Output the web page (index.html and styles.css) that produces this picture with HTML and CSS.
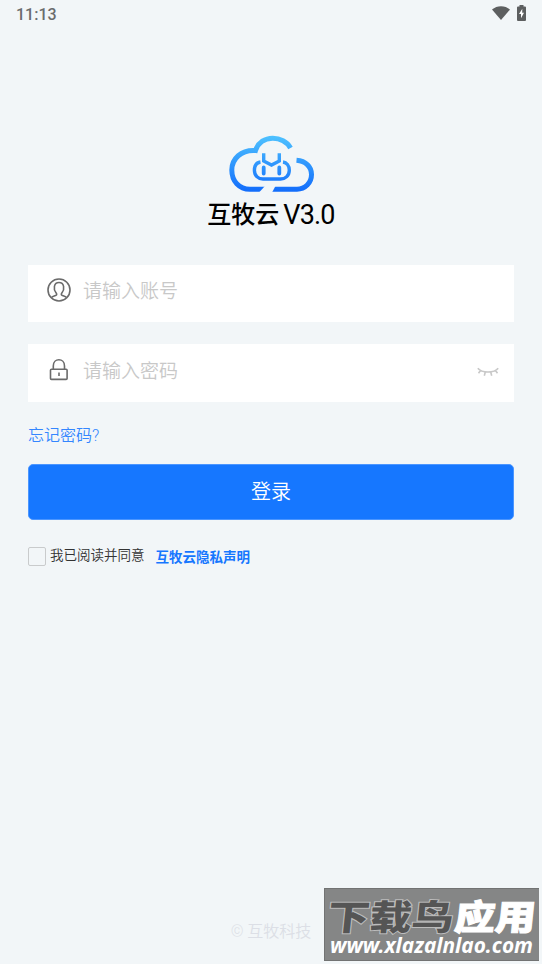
FILE: index.html
```
<!DOCTYPE html>
<html lang="zh-CN">

<head>
    <meta charset="UTF-8">
    <meta name="viewport" content="width=device-width, initial-scale=1.0">
    <title>互牧云</title>
    <link rel="stylesheet" href="styles.css">
</head>

<body>

    <!-- Status bar -->
    <div class="status-bar">
        <span class="time">11:13</span>
        <div class="status-icons">
            <svg width="18" height="14" viewBox="0 0 18 14">
                <path d="M0 3.6C5 -.9 13 -.9 18 3.6L9 14z" fill="#5d5f60" />
            </svg>
            <svg width="9" height="16" viewBox="0 0 9 16">
                <path d="M2.5 0h4v1.5H8q1 0 1 1V15q0 1-1 1H1q-1 0-1-1V2.5q0-1 1-1h1.5z" fill="#5d5f60" />
                <path d="M5.3 3.7L2 9h2v4.3L7 7.7H5.2z" fill="#fff" />
            </svg>
        </div>
    </div>

    <!-- Logo -->
    <header class="logo">
        <svg class="logo-cloud" width="90" height="62" viewBox="0 0 90 62" fill="none" stroke="url(#cloudBlue)" stroke-width="5">
            <defs>
                <linearGradient id="cloudBlue" gradientUnits="userSpaceOnUse" x1="0" y1="2" x2="0" y2="59">
                    <stop offset="0" stop-color="#4fc3ff" />
                    <stop offset="1" stop-color="#126cfb" />
                </linearGradient>
            </defs>
            <path d="M63.5 15C57 2.500 34 .5 28.500 17.500C14 16.500 4.800 26 4.800 37C4.800 48 12 56.200 23 56.200H70C78 56.200 84.500 50 84.500 41.500C84.500 34 79 28 69.500 27.300" />
            <path class="cloud-gap" d="M38 53h10.500L45 59.500H32z" />
            <path d="M33.500 29C30 29.500 27.400 32.500 27.400 37.300C27.400 42.500 31 46 36 46H53.500C58.500 46 62.300 42.500 62.300 37.300C62.300 32.500 59.500 29.500 56 29" stroke-width="3.400" />
            <path d="M36.700 20.300V28L44.500 32L52.300 28V20.300" stroke-width="3.400" />
            <path d="M36.700 34.500v6M52.300 34.500v6" stroke-width="3.800" stroke-linecap="round" />
        </svg>
        <h1 class="logo-name"><span>互牧云</span><span class="version">V3.0</span></h1>
    </header>

    <!-- Login form -->
    <form class="login">
        <label class="field">
            <svg class="field-icon" width="24" height="24" viewBox="0 0 24 24" fill="none" stroke="#6b6b6b" stroke-width="1.6">
                <circle cx="12" cy="12" r="11" />
                <path d="M4.500 19.500C5.500 18.200 8 17.800 9 17.300C10 16.700 9.800 15.800 9 14.800C6.200 11.200 6.600 4.500 12 4.500C17.400 4.500 17.800 11.200 15 14.800C14.200 15.800 14 16.700 15 17.300C16 17.800 18.500 18.200 19.500 19.500" />
            </svg>
            <input type="text" placeholder="请输入账号">
        </label>
        <label class="field field-password">
            <svg class="field-icon" width="24" height="24" viewBox="0 0 24 24" fill="none" stroke="#6b6b6b" stroke-width="1.6">
                <rect x="3.500" y="11.200" width="16.600" height="10.200" rx="1" />
                <path d="M6.300 11.200V8C6.300 -.3 17.500 -.3 17.500 8v3.200M12 14.500v3.500" />
            </svg>
            <input type="password" placeholder="请输入密码">
            <svg class="eye" width="22" height="10" viewBox="0 0 22 10" fill="none" stroke="#c8c8c8" stroke-width="1.6">
                <path d="M.8 1.200C5 6.300 17 6.300 21.200 1.200M3.500 3.500L1.500 6.200M8.300 5L7.300 8.800M13.700 5l1 3.800M18.500 3.500l2 2.700" />
            </svg>
        </label>
        <a class="forgot" href="#">忘记密码?</a>
        <button class="submit" type="button">登录</button>
        <div class="agreement">
            <span class="checkbox"></span>
            <span class="agree-text">我已阅读并同意</span>
            <a class="privacy" href="#">互牧云隐私声明</a>
        </div>
    </form>

    <footer class="copyright">© 互牧科技</footer>

    <!-- Download site badge -->
    <div class="site-badge">
        <svg width="215" height="73" viewBox="0 0 215 73">
            <g class="badge-title" transform="skewX(-6)">
                <text class="badge-dark" x="7" y="42" textLength="126" lengthAdjust="spacingAndGlyphs">下载鸟</text>
                <text class="badge-light" x="134" y="42" textLength="81" lengthAdjust="spacingAndGlyphs">应用</text>
            </g>
            <text class="badge-url" x="6" y="65" textLength="203" lengthAdjust="spacingAndGlyphs">www.xlazalnlao.com</text>
        </svg>
    </div>

</body>

</html>
```
FILE: styles.css
```
* {
    margin: 0;
    padding: 0;
    box-sizing: border-box;
    font-family: Roboto, "Noto Sans CJK SC", sans-serif;
}

body {
    display: flex;
    flex-direction: column;
    height: 964px;
    overflow: hidden;
    background-color: #f2f6f8;
}

a {
    text-decoration: none;
}

svg {
    display: block;
}

/* Status bar */
.status-bar {
    display: flex;
    justify-content: space-between;
    height: 28px;
    padding: 5px 16px 0;
}

.time {
    font-size: 16px;
    font-weight: 500;
    line-height: 19px;
    color: #6a6c6d;
}

.status-icons {
    display: flex;
    gap: 7px;
}

.status-icons svg:first-child {
    margin-top: 1px;
}

/* Logo */
.logo {
    display: flex;
    flex-direction: column;
    align-items: center;
    height: 237px;
    padding-top: 105px;
}

.logo-cloud {
    margin-left: 2px;
}

.cloud-gap {
    fill: #f2f6f8;
    stroke: none;
}

.logo-name {
    display: flex;
    gap: 4px;
    margin-top: 5px;
    font-size: 24px;
    font-weight: 500;
    line-height: 30px;
    color: #000;
}

.version {
    font-size: 27px;
    font-weight: 400;
    letter-spacing: -0.8px;
}

/* Form */
.login {
    display: flex;
    flex-direction: column;
    padding: 0 28px;
}

.field {
    display: flex;
    height: 57px;
    padding: 13px 15px 0 19px;
    background: white;
}

.field-password {
    margin-top: 22px;
    height: 58px;
    padding-top: 14px;
}

.field input {
    flex: 1;
    min-width: 0;
    height: 26px;
    margin-left: 12px;
    border: none;
    outline: none;
    background: none;
    font-size: 19px;
    font-weight: 350;
}

.field input::placeholder {
    color: #c8c8c8;
}

.eye {
    margin-top: 9px;
}

.forgot {
    margin-top: 22px;
    font-size: 16px;
    line-height: 24px;
    font-weight: 350;
    color: #3486ff;
}

.submit {
    height: 56px;
    margin-top: 16px;
    padding-bottom: 3px;
    border: 1px solid #4c96ff;
    border-radius: 5px;
    background: #1677ff;
    color: white;
    font-size: 20px;
    font-weight: 350;
}

.agreement {
    display: flex;
    margin-top: 25px;
    font-size: 13.5px;
    line-height: 20px;
}

.checkbox {
    width: 18px;
    height: 19px;
    margin: 2px 4px 0 0;
    border: 1px solid #c9cbcc;
    border-radius: 2px;
}

.agree-text {
    font-weight: 350;
    color: #333;
}

.privacy {
    margin: 2px 0 0 11px;
    font-weight: 700;
    color: #1677ff;
}

/* Footer */
.copyright {
    margin: auto 0 20px;
    text-align: center;
    font-size: 16px;
    line-height: 24px;
    font-weight: 350;
    color: #dcdfe6;
}

/* Badge in the bottom corner, over the page */
.site-badge {
    position: absolute;
    right: 3px;
    bottom: 3px;
    width: 215px;
    height: 73px;
    background: #858686;
    box-shadow: inset 1px 1px #727373, inset 0 -1px #727373;
}

.badge-title {
    font-size: 35px;
    font-weight: 900;
    paint-order: stroke;
}

.badge-dark {
    fill: #555;
    stroke: #bcbcbc;
    stroke-width: 2px;
}

.badge-light {
    fill: #fff;
    stroke: #fff;
    stroke-width: 1px;
}

.badge-url {
    font-family: "Noto Sans", sans-serif;
    font-size: 21px;
    font-weight: 700;
    font-style: italic;
    fill: #fff;
}
```
